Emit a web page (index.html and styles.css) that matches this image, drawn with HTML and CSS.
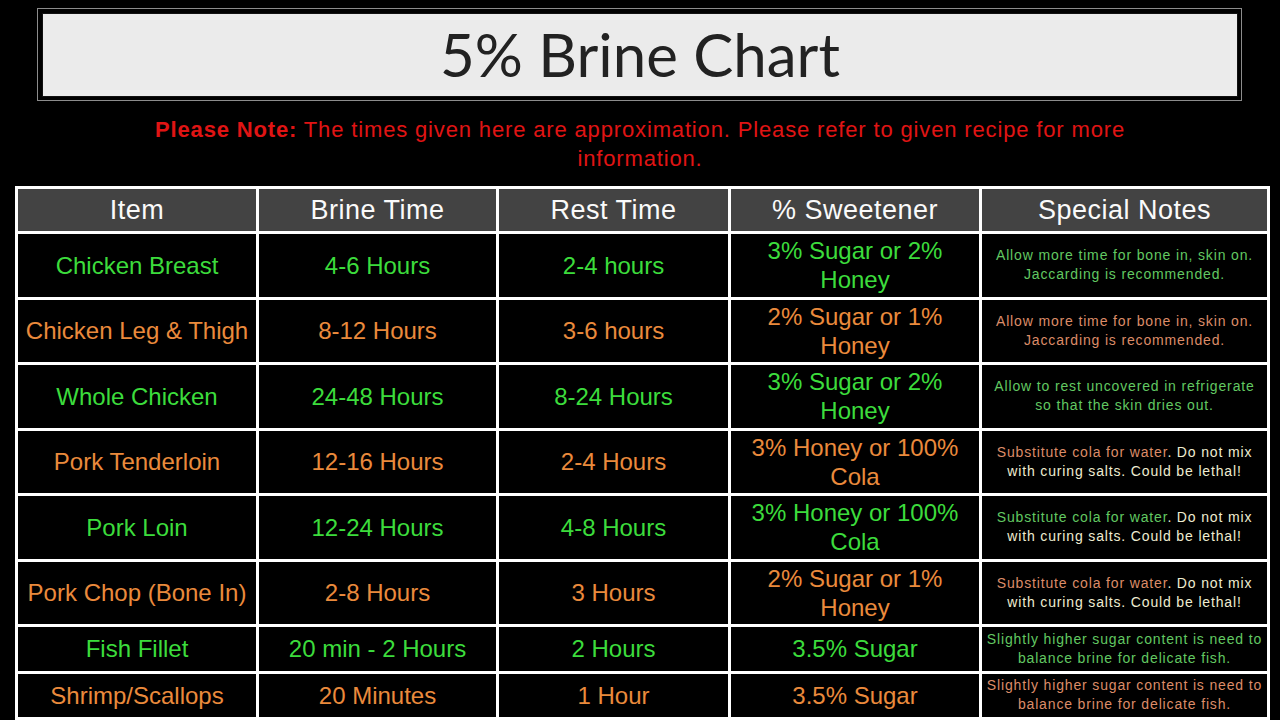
FILE: index.html
```html
<!DOCTYPE html>
<html lang="en">
<head>
<meta charset="utf-8">
<title>5% Brine Chart</title>
<link rel="stylesheet" href="styles.css">
</head>
<body>
<div class="page">
  <header class="title-frame">
    <div class="title-box"><h1>5% Brine Chart</h1></div>
  </header>
  <p class="note"><b>Please Note:</b> The times given here are approximation. Please refer to given recipe for more<br>information.</p>
  <table class="chart">
    <thead>
      <tr><th class="c1">Item</th><th class="c2">Brine Time</th><th class="c3">Rest Time</th><th class="c4">% Sweetener</th><th class="c5">Special Notes</th></tr>
    </thead>
    <tbody>
      <tr class="tall g"><td>Chicken Breast</td><td>4-6 Hours</td><td>2-4 hours</td><td>3% Sugar or 2%<br>Honey</td><td class="notes">Allow more time for bone in, skin on.<br>Jaccarding is recommended.</td></tr>
      <tr class="tall o"><td>Chicken Leg &amp; Thigh</td><td>8-12 Hours</td><td>3-6 hours</td><td>2% Sugar or 1%<br>Honey</td><td class="notes">Allow more time for bone in, skin on.<br>Jaccarding is recommended.</td></tr>
      <tr class="tall g"><td>Whole Chicken</td><td>24-48 Hours</td><td>8-24 Hours</td><td>3% Sugar or 2%<br>Honey</td><td class="notes">Allow to rest uncovered in refrigerate<br>so that the skin dries out.</td></tr>
      <tr class="tall o"><td>Pork Tenderloin</td><td>12-16 Hours</td><td>2-4 Hours</td><td>3% Honey or 100%<br>Cola</td><td class="notes">Substitute cola for water<span class="warn">. Do not mix<br>with curing salts. Could be lethal!</span></td></tr>
      <tr class="tall g"><td>Pork Loin</td><td>12-24 Hours</td><td>4-8 Hours</td><td>3% Honey or 100%<br>Cola</td><td class="notes">Substitute cola for water<span class="warn">. Do not mix<br>with curing salts. Could be lethal!</span></td></tr>
      <tr class="tall o"><td>Pork Chop (Bone In)</td><td>2-8 Hours</td><td>3 Hours</td><td>2% Sugar or 1%<br>Honey</td><td class="notes">Substitute cola for water<span class="warn">. Do not mix<br>with curing salts. Could be lethal!</span></td></tr>
      <tr class="short g"><td>Fish Fillet</td><td>20 min - 2 Hours</td><td>2 Hours</td><td>3.5% Sugar</td><td class="notes">Slightly higher sugar content is need to<br>balance brine for delicate fish.</td></tr>
      <tr class="short o"><td>Shrimp/Scallops</td><td>20 Minutes</td><td>1 Hour</td><td>3.5% Sugar</td><td class="notes">Slightly higher sugar content is need to<br>balance brine for delicate fish.</td></tr>
    </tbody>
  </table>
</div>
</body>
</html>
```

FILE: styles.css
```css
html, body {
  margin: 0;
  padding: 0;
  background: #000;
}
body {
  width: 1280px;
  height: 720px;
  overflow: hidden;
  font-family: "Liberation Sans", Arial, sans-serif;
}
.page {
  display: flex;
  flex-direction: column;
  align-items: stretch;
}
.title-frame {
  margin: 8px 38px 0 37px;
  border: 1px solid #8c8c8c;
  padding: 4px 3px 3px 4px;
  height: 84px;
}
.title-box {
  height: 100%;
  background: #ebebeb;
  border: 1px solid #111;
  box-sizing: border-box;
  display: flex;
  align-items: center;
  justify-content: center;
}
.title-box h1 {
  margin: 0;
  font-family: Lato, "Open Sans", sans-serif;
  font-weight: 400;
  font-size: 60px;
  color: #222;
  line-height: 1;
  padding-bottom: 3px;
}
.note {
  margin: 14px 0 0;
  text-align: center;
  color: #e01414;
  font-size: 22px;
  line-height: 29px;
  letter-spacing: 0.85px;
}
.note b {
  font-weight: 700;
}
.chart {
  margin: 13px 0 0 15px;
  width: 1255px;
  border-collapse: separate;
  border-spacing: 3px;
  background: #fff;
  table-layout: fixed;
}
.chart .c1 { width: 238px; }
.chart .c2 { width: 237px; }
.chart .c3 { width: 229px; }
.chart .c4 { width: 248px; }
.chart .c5 { width: 285px; }
.chart th {
  background: #434343;
  color: #fafafa;
  font-weight: 400;
  font-size: 27px;
  letter-spacing: 0.5px;
  height: 42px;
  padding: 0;
  text-align: center;
  vertical-align: middle;
}
.chart td {
  background: #000;
  padding: 0;
  text-align: center;
  vertical-align: middle;
  font-size: 24px;
  line-height: 29px;
}
.chart tr.tall td { height: 62.5px; }
.chart tr.short td { height: 43.5px; }
.chart tr.g td { color: #3cdc3c; }
.chart tr.o td { color: #ea8a3c; }
.chart td.notes {
  font-size: 14px;
  line-height: 19px;
  letter-spacing: 0.85px;
}
.chart tr.g td.notes { color: #62c862; }
.chart tr.o td.notes { color: #dc8c68; }
.chart td.notes .warn { color: #eeecd0; }
```
